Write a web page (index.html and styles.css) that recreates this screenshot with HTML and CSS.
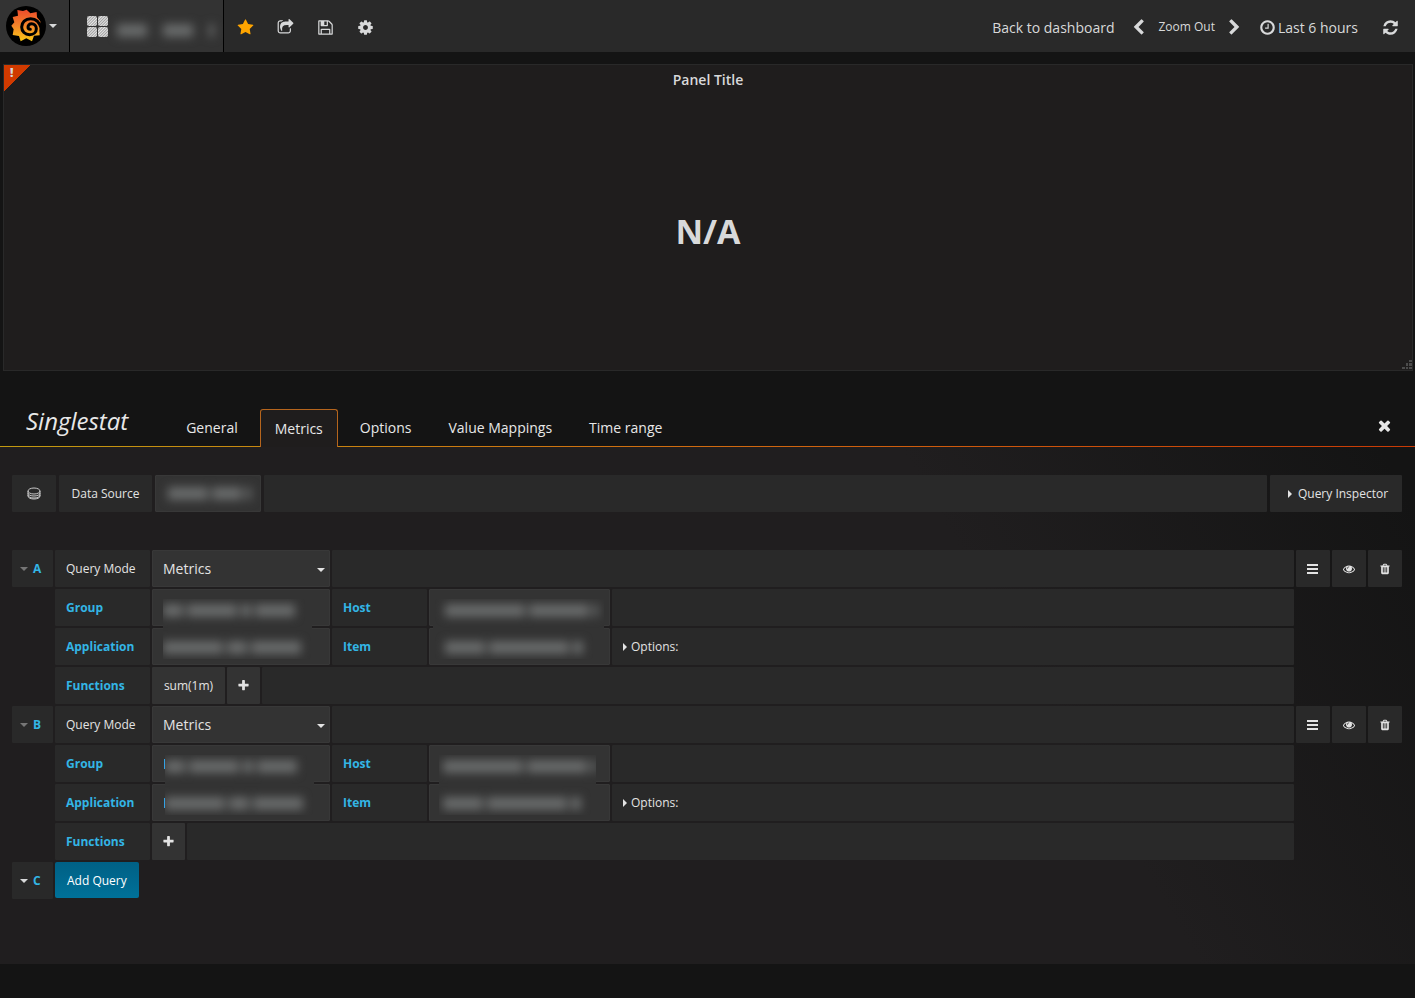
FILE: index.html
```html
<!DOCTYPE html>
<html lang="en">

<head>
    <meta charset="UTF-8">
    <meta name="viewport" content="width=device-width, initial-scale=1.0">
    <title>Grafana - Singlestat</title>
    <link rel="stylesheet" href="styles.css">
</head>

<body>
    <!-- icon set -->
    <svg class="sprite" aria-hidden="true">
        <symbol id="star" viewBox="0 0 1792 1792"><path d="M1728 647q0 22-26 48l-363 354 86 500q1 7 1 20 0 21-10.5 35.5t-30.5 14.5q-19 0-40-12l-449-236-449 236q-22 12-40 12-21 0-31.5-14.5t-10.5-35.5q0-6 2-20l86-500-364-354q-25-27-25-48 0-37 56-46l502-73 225-455q19-41 49-41t49 41l225 455 502 73q56 9 56 46z"/></symbol>
        <symbol id="share" viewBox="0 0 1792 1792"><path d="M1472 989v259q0 119-84.5 203.5t-203.5 84.5h-832q-119 0-203.5-84.5t-84.5-203.5v-832q0-119 84.5-203.5t203.5-84.5h255q13 0 22.5 9.5t9.5 22.5q0 27-26 32-77 26-133 60-10 4-16 4h-112q-66 0-113 47t-47 113v832q0 66 47 113t113 47h832q66 0 113-47t47-113v-214q0-19 18-29 28-13 54-37 16-16 35-8 21 9 21 29zm237-496l-384 384q-18 19-45 19-12 0-25-5-39-17-39-59v-192h-160q-323 0-438 131-119 137-74 473 3 23-20 34-8 2-12 2-16 0-26-13-10-14-21-31t-39.5-68.5-49.5-99.5-38.5-114-17.5-122q0-49 3.5-91t14-90 28-88 47-81.5 68.5-74 94.5-61.5 124.5-48.5 159.5-30.5 196.5-11h160v-192q0-42 39-59 13-5 25-5 26 0 45 19l384 384q19 19 19 45t-19 45z"/></symbol>
        <symbol id="save" viewBox="0 0 1792 1792"><path d="M512 1536h768v-384h-768v384zm896 0h128v-896q0-14-10-38.5t-20-34.5l-281-281q-10-10-34-20t-39-10v416q0 40-28 68t-68 28h-576q-40 0-68-28t-28-68v-416h-128v1280h128v-416q0-40 28-68t68-28h832q40 0 68 28t28 68v416zm-384-928v-320q0-13-9.5-22.5t-22.5-9.5h-192q-13 0-22.5 9.5t-9.5 22.5v320q0 13 9.5 22.5t22.5 9.5h192q13 0 22.5-9.5t9.5-22.5zm640 32v928q0 40-28 68t-68 28h-1344q-40 0-68-28t-28-68v-1344q0-40 28-68t68-28h928q40 0 88 20t76 48l280 280q28 28 48 76t20 88z"/></symbol>
        <symbol id="cog" viewBox="0 0 1792 1792"><path d="M1152 896q0-106-75-181t-181-75-181 75-75 181 75 181 181 75 181-75 75-181zm512-109v222q0 12-8 23t-20 13l-185 28q-19 54-39 91 35 50 107 138 10 12 10 25t-9 23q-27 37-99 108t-94 71q-12 0-26-9l-138-108q-44 23-91 38-16 136-29 186-7 28-36 28h-222q-14 0-24.5-8.5t-11.5-21.5l-28-184q-49-16-90-37l-141 107q-10 9-25 9-14 0-25-11-126-114-165-168-7-10-7-23 0-12 8-23 15-21 51-66.5t54-70.5q-27-50-41-99l-183-27q-13-2-21-12.5t-8-23.5v-222q0-12 8-23t19-13l186-28q14-46 39-92-40-57-107-138-10-12-10-24 0-10 9-23 26-36 98.5-107.5t94.5-71.5q13 0 26 10l138 107q44-23 91-38 16-136 29-186 7-28 36-28h222q14 0 24.5 8.5t11.5 21.5l28 184q49 16 90 37l142-107q9-9 24-9 13 0 25 10 129 119 165 170 7 8 7 22 0 12-8 23-15 21-51 66.5t-54 70.5q26 50 41 98l183 28q13 2 21 12.5t8 23.5z"/></symbol>
        <symbol id="left" viewBox="0 0 1792 1792"><path d="M1427 301l-531 531 531 531q19 19 19 45t-19 45l-166 166q-19 19-45 19t-45-19l-742-742q-19-19-19-45t19-45l742-742q19-19 45-19t45 19l166 166q19 19 19 45t-19 45z"/></symbol>
        <symbol id="right" viewBox="0 0 1792 1792"><path d="M1363 877l-742 742q-19 19-45 19t-45-19l-166-166q-19-19-19-45t19-45l531-531-531-531q-19-19-19-45t19-45l166-166q19-19 45-19t45 19l742 742q19 19 19 45t-19 45z"/></symbol>
        <symbol id="clock" viewBox="0 0 1792 1792"><path d="M1024 544v448q0 14-9 23t-23 9h-320q-14 0-23-9t-9-23v-64q0-14 9-23t23-9h224v-352q0-14 9-23t23-9h64q14 0 23 9t9 23zm416 352q0-148-73-273t-198-198-273-73-273 73-198 198-73 273 73 273 198 198 273 73 273-73 198-198 73-273zm224 0q0 209-103 385.5t-279.5 279.5-385.5 103-385.5-103-279.5-279.5-103-385.5 103-385.5 279.5-279.5 385.5-103 385.5 103 279.5 279.5 103 385.5z"/></symbol>
        <symbol id="refresh" viewBox="0 0 1792 1792"><path d="M1639 1056q0 5-1 7-64 268-268 434.5t-478 166.5q-146 0-282.5-55t-243.5-157l-129 129q-19 19-45 19t-45-19-19-45v-448q0-26 19-45t45-19h448q26 0 45 19t19 45-19 45l-137 137q71 66 161 102t187 36q134 0 250-65t186-179q11-17 53-117 8-23 30-23h192q13 0 22.5 9.5t9.5 22.5zm25-800v448q0 26-19 45t-45 19h-448q-26 0-45-19t-19-45 19-45l138-138q-148-137-349-137-134 0-250 65t-186 179q-11 17-53 117-8 23-30 23h-199q-13 0-22.5-9.5t-9.5-22.5v-7q65-268 270-434.5t480-166.5q146 0 284 55.5t245 156.5l130-129q19-19 45-19t45 19 19 45z"/></symbol>
        <symbol id="times" viewBox="0 0 1792 1792"><path d="M1490 1322q0 40-28 68l-136 136q-28 28-68 28t-68-28l-294-294-294 294q-28 28-68 28t-68-28l-136-136q-28-28-28-68t28-68l294-294-294-294q-28-28-28-68t28-68l136-136q28-28 68-28t68 28l294 294 294-294q28-28 68-28t68 28l136 136q28 28 28 68t-28 68l-294 294 294 294q28 28 28 68z"/></symbol>
        <symbol id="bars" viewBox="0 0 12 12"><path d="M0 1h11v2H0zM0 5h11v2H0zM0 9h11v2H0z"/></symbol>
        <symbol id="eye" viewBox="0 0 1792 1792"><path d="M1664 960q-152-236-381-353 61 104 61 225 0 185-131.5 316.5t-316.5 131.5-316.5-131.5-131.5-316.5q0-121 61-225-229 117-381 353 133 205 333.5 326.5t434.5 121.5 434.5-121.5 333.5-326.5zm-720-384q0-20-14-34t-34-14q-125 0-214.5 89.5t-89.5 214.5q0 20 14 34t34 14 34-14 14-34q0-86 61-147t147-61q20 0 34-14t14-34zm848 384q0 34-20 69-140 230-376.5 368.5t-499.5 138.5-499.5-139-376.5-368q-20-35-20-69t20-69q140-229 376.5-368t499.5-139 499.5 139 376.5 368q20 35 20 69z"/></symbol>
        <symbol id="trash" viewBox="0 0 1792 1792"><path d="M704 1376v-704q0-14-9-23t-23-9h-64q-14 0-23 9t-9 23v704q0 14 9 23t23 9h64q14 0 23-9t9-23zm256 0v-704q0-14-9-23t-23-9h-64q-14 0-23 9t-9 23v704q0 14 9 23t23 9h64q14 0 23-9t9-23zm256 0v-704q0-14-9-23t-23-9h-64q-14 0-23 9t-9 23v704q0 14 9 23t23 9h64q14 0 23-9t9-23zm-544-992h448l-48-117q-7-9-17-11h-317q-10 2-17 11zm928 32v64q0 14-9 23t-23 9h-96v948q0 83-47 143.5t-113 60.5h-832q-66 0-113-58.5t-47-141.5v-952h-96q-14 0-23-9t-9-23v-64q0-14 9-23t23-9h309l70-167q15-37 54-63t79-26h320q40 0 79 26t54 63l70 167h309q14 0 23 9t9 23z"/></symbol>
        <symbol id="plus" viewBox="0 0 1792 1792"><path d="M1600 736v192q0 40-28 68t-68 28h-416v416q0 40-28 68t-68 28h-192q-40 0-68-28t-28-68v-416h-416q-40 0-68-28t-28-68v-192q0-40 28-68t68-28h416v-416q0-40 28-68t68-28h192q40 0 68 28t28 68v416h416q40 0 68 28t28 68z"/></symbol>
    </svg>

    <nav class="navbar">
        <button class="brand" aria-label="Main menu">
            <svg class="logo" viewBox="0 0 120 120" aria-hidden="true">
                <defs>
                    <linearGradient id="flame" x1="0" y1="0" x2="0" y2="1">
                        <stop offset="0" stop-color="#ee4b2b"/>
                        <stop offset=".5" stop-color="#f4842a"/>
                        <stop offset="1" stop-color="#fcc915"/>
                    </linearGradient>
                </defs>
                <circle cx="60" cy="60" r="60" fill="#000"/>
                <path fill="url(#flame)" d="M62 11l11 11 19-4 1 16 10 12v14l-3 12 1 16-17 1-6 17-17-9-17 9-5-16-19-3 3-17-7-11 9-10-5-16 16-4-2-17 17 3z"/>
                <path fill="none" stroke="#000" stroke-width="9" stroke-linecap="round" d="M106 68C101 48 88 38 74 38 58 38 47 49 47 63c0 13 10 23 24 23 12 0 20-8 20-18 0-9-7-15-14-15-7 0-11 5-11 10 0 4 3 7 7 7"/>
            </svg>
            <span class="caret"></span>
        </button>
        <button class="dash-picker" aria-label="Dashboard">
            <svg class="grid-icon" viewBox="0 0 22 22" aria-hidden="true">
                <defs>
                    <pattern id="hatch" width="2" height="2" patternUnits="userSpaceOnUse" patternTransform="rotate(45)">
                        <rect width="2" height="2" fill="#a0a0a0"/>
                        <rect width="1" height="2" fill="#e8e8e8"/>
                    </pattern>
                </defs>
                <g fill="url(#hatch)">
                    <rect width="10" height="10" rx="2"/>
                    <rect x="11" width="10" height="10" rx="2"/>
                    <rect y="11" width="10" height="10" rx="2"/>
                    <rect x="11" y="11" width="10" height="10" rx="2"/>
                </g>
            </svg>
            <span class="smudge dash-name"><i class="w30"></i><i class="w30"></i><i class="w5"></i></span>
        </button>
        <div class="nav-actions">
            <button class="starred" aria-label="Star"><svg class="icon"><use href="#star"/></svg></button>
            <button aria-label="Share"><svg class="icon"><use href="#share"/></svg></button>
            <button aria-label="Save"><svg class="icon"><use href="#save"/></svg></button>
            <button aria-label="Settings"><svg class="icon"><use href="#cog"/></svg></button>
        </div>
        <div class="nav-time">
            <a href="#" class="back">Back to dashboard</a>
            <button aria-label="Shift time back"><svg class="icon"><use href="#left"/></svg></button>
            <button class="zoom">Zoom Out</button>
            <button aria-label="Shift time forward"><svg class="icon"><use href="#right"/></svg></button>
            <button class="range"><svg class="icon"><use href="#clock"/></svg>Last 6 hours</button>
            <button aria-label="Refresh"><svg class="icon"><use href="#refresh"/></svg></button>
        </div>
    </nav>

    <section class="panel">
        <div class="panel-error">!</div>
        <h2>Panel Title</h2>
        <div class="stat">N/A</div>
        <svg class="resize" viewBox="0 0 10 10" aria-hidden="true">
            <path d="M7 0h3v2H7zM4 3h2v3H4zM7 3h3v3H7zM0 7h3v2H0zM4 7h2v2H4zM7 7h3v2H7z"/>
        </svg>
    </section>

    <header class="tabs-header">
        <h1>Singlestat</h1>
        <nav class="tabs">
            <a href="#">General</a>
            <a href="#" class="active">Metrics</a>
            <a href="#">Options</a>
            <a href="#">Value Mappings</a>
            <a href="#">Time range</a>
        </nav>
        <button class="close" aria-label="Close"><svg class="icon"><use href="#times"/></svg></button>
    </header>

    <main class="editor">
        <div class="source-row">
            <div class="cell source-icon">
                <svg viewBox="0 0 14 14" aria-hidden="true">
                    <ellipse cx="7" cy="4" rx="6" ry="3"/>
                    <path d="M1 4v5c0 4 12 4 12 0V4M1 6c0 4 12 4 12 0M1 8c0 4 12 4 12 0"/>
                </svg>
            </div>
            <div class="cell source-label">Data Source</div>
            <button class="cell field source-value" aria-label="Data Source"><span class="smudge"><i class="w40"></i><i class="w30"></i><i class="w5"></i></span></button>
            <div class="cell grow"></div>
            <button class="cell inspector"><span class="caret-right"></span>Query Inspector</button>
        </div>

        <div class="query">
            <button class="cell letter"><span class="caret dim"></span>A</button>
            <div class="rows">
                <div class="row">
                    <label class="cell label" for="mode-a">Query Mode</label>
                    <div class="select">
                        <select id="mode-a" class="cell field"><option>Metrics</option></select>
                        <span class="caret"></span>
                    </div>
                    <div class="cell grow"></div>
                </div>
                <div class="row">
                    <div class="cell label key">Group</div>
                    <button class="cell field wide" aria-label="Group"></button>
                    <div class="cell label key">Host</div>
                    <button class="cell field host" aria-label="Host"></button>
                    <div class="cell grow"></div>
                    <div class="mask mask-group">
                        <span class="smudge"><i class="w20"></i><i class="w50"></i><i class="w10"></i><i class="w40"></i></span>
                        <span class="smudge"><i class="w60"></i><i class="w20"></i><i class="w50"></i></span>
                    </div>
                    <div class="mask mask-host">
                        <span class="smudge"><i class="w80"></i><i class="w60"></i><i class="w5"></i></span>
                        <span class="smudge"><i class="w40"></i><i class="w80"></i><i class="w10"></i></span>
                    </div>
                </div>
                <div class="row">
                    <div class="cell label key">Application</div>
                    <button class="cell field wide" aria-label="Application"></button>
                    <div class="cell label key">Item</div>
                    <button class="cell field host" aria-label="Item"></button>
                    <button class="cell grow options"><span class="caret-right"></span>Options:</button>
                </div>
                <div class="row">
                    <div class="cell label key">Functions</div>
                    <button class="cell field func">sum(1m)</button>
                    <button class="cell field add" aria-label="Add function"><svg class="icon"><use href="#plus"/></svg></button>
                    <div class="cell grow"></div>
                </div>
            </div>
            <div class="query-tools">
                <button class="cell" aria-label="Query menu"><svg class="icon"><use href="#bars"/></svg></button>
                <button class="cell" aria-label="Toggle query"><svg class="icon"><use href="#eye"/></svg></button>
                <button class="cell" aria-label="Remove query"><svg class="icon"><use href="#trash"/></svg></button>
            </div>
        </div>

        <div class="query query-b">
            <button class="cell letter"><span class="caret dim"></span>B</button>
            <div class="rows">
                <div class="row">
                    <label class="cell label" for="mode-b">Query Mode</label>
                    <div class="select">
                        <select id="mode-b" class="cell field"><option>Metrics</option></select>
                        <span class="caret"></span>
                    </div>
                    <div class="cell grow"></div>
                </div>
                <div class="row">
                    <div class="cell label key">Group</div>
                    <button class="cell field wide edge" aria-label="Group"></button>
                    <div class="cell label key">Host</div>
                    <button class="cell field host" aria-label="Host"></button>
                    <div class="cell grow"></div>
                    <div class="mask mask-group">
                        <span class="smudge"><i class="w20"></i><i class="w50"></i><i class="w10"></i><i class="w40"></i></span>
                        <span class="smudge"><i class="w60"></i><i class="w20"></i><i class="w50"></i></span>
                    </div>
                    <div class="mask mask-host">
                        <span class="smudge"><i class="w80"></i><i class="w60"></i><i class="w5"></i></span>
                        <span class="smudge"><i class="w40"></i><i class="w80"></i><i class="w10"></i></span>
                    </div>
                </div>
                <div class="row">
                    <div class="cell label key">Application</div>
                    <button class="cell field wide edge" aria-label="Application"></button>
                    <div class="cell label key">Item</div>
                    <button class="cell field host" aria-label="Item"></button>
                    <button class="cell grow options"><span class="caret-right"></span>Options:</button>
                </div>
                <div class="row">
                    <div class="cell label key">Functions</div>
                    <button class="cell field add" aria-label="Add function"><svg class="icon"><use href="#plus"/></svg></button>
                    <div class="cell grow"></div>
                </div>
            </div>
            <div class="query-tools">
                <button class="cell" aria-label="Query menu"><svg class="icon"><use href="#bars"/></svg></button>
                <button class="cell" aria-label="Toggle query"><svg class="icon"><use href="#eye"/></svg></button>
                <button class="cell" aria-label="Remove query"><svg class="icon"><use href="#trash"/></svg></button>
            </div>
        </div>

        <div class="query">
            <button class="cell letter"><span class="caret"></span>C</button>
            <button class="add-query">Add Query</button>
        </div>
    </main>
</body>

</html>
```
FILE: styles.css
```css
* {
    box-sizing: border-box;
    margin: 0;
    padding: 0;
}

body {
    background-color: #141414;
    color: #d8d9da;
    font-family: "Open Sans", Helvetica, Arial, sans-serif;
    font-size: 14px;
}

button,
select {
    background: none;
    border: none;
    color: inherit;
    font: inherit;
    cursor: pointer;
}

a {
    color: inherit;
    text-decoration: none;
}

.sprite {
    position: absolute;
    width: 0;
    height: 0;
}

.icon {
    width: 17px;
    height: 17px;
    fill: currentColor;
    flex: none;
}

.caret {
    border: 4px solid transparent;
    border-top-color: currentColor;
    border-bottom: none;
}

.caret-right {
    border: 4px solid transparent;
    border-left-color: currentColor;
    border-right: none;
}

/* top bar */
.navbar {
    display: flex;
    height: 52px;
    background-color: #292929;
}

.navbar button {
    display: flex;
    align-items: center;
}

.navbar .brand {
    width: 70px;
    padding-left: 6px;
    gap: 3px;
    background-color: #333;
    border-right: 1px solid #000;
}

.logo {
    width: 40px;
    height: 40px;
}

.navbar .dash-picker {
    width: 154px;
    padding: 2px 0 0 17px;
    gap: 8px;
    background-color: #333;
    border-right: 1px solid #000;
}

.grid-icon {
    width: 22px;
    height: 22px;
    flex: none;
}

.nav-actions {
    display: flex;
    gap: 23px;
    padding: 2px 0 0 13px;
}

.nav-actions .starred {
    color: #ffa500;
}

.nav-time {
    display: flex;
    align-items: center;
    margin-left: auto;
    padding: 2px 16px 0 0;
}

.nav-time .back {
    margin-right: 16px;
}

.nav-time .zoom {
    padding: 0 11px 1px;
    font-size: 12px;
}

.nav-time .range {
    gap: 2px;
    margin: 0 24px 0 16px;
}

/* blurred values */
.smudge {
    display: flex;
    align-items: center;
    gap: 4px;
    filter: blur(5px);
}

.smudge i {
    height: 13px;
    background-color: #686a6a;
}

.smudge .w5 { width: 5px; }
.smudge .w10 { width: 10px; }
.smudge .w20 { width: 20px; }
.smudge .w30 { width: 30px; }
.smudge .w40 { width: 40px; }
.smudge .w50 { width: 50px; }
.smudge .w60 { width: 60px; }
.smudge .w80 { width: 80px; }

.dash-name {
    gap: 16px;
    padding-top: 6px;
}

/* panel */
.panel {
    position: relative;
    display: flex;
    flex-direction: column;
    height: 307px;
    margin: 12px 2px 0 3px;
    background-color: #1f1d1d;
    border: 1px solid #292929;
}

.panel h2 {
    padding-top: 5px;
    font-size: 14px;
    font-weight: 600;
    line-height: 20px;
    text-align: center;
}

.stat {
    flex: 1;
    display: flex;
    align-items: center;
    justify-content: center;
    padding-top: 2px;
    font-size: 34px;
    font-weight: 700;
}

.panel-error {
    position: absolute;
    top: 0;
    left: 0;
    width: 27px;
    height: 27px;
    padding-left: 6px;
    background: linear-gradient(135deg, #d13a00 50%, transparent 50%);
    font-size: 12px;
    font-weight: 800;
    line-height: 15px;
}

.resize {
    position: absolute;
    right: 0;
    bottom: 0;
    width: 10px;
    height: 10px;
    fill: #4c4c4c;
}

/* tabs */
.tabs-header {
    display: flex;
    align-items: flex-end;
    height: 76px;
    padding: 0 22px 0 26px;
    background: linear-gradient(90deg, #c29a10, #d06a10 50%, #c93a05) bottom / 100% 1px no-repeat;
    color: #e8e8e8;
}

.tabs-header h1 {
    margin-right: 43px;
    padding-bottom: 9px;
    font-size: 24px;
    font-style: italic;
    font-weight: 400;
    line-height: 34px;
}

.tabs {
    display: flex;
    align-items: flex-end;
    gap: 7px;
}

.tabs a {
    height: 38px;
    padding: 0 15px;
    line-height: 38px;
}

.tabs .active {
    padding: 0 14px;
    background-color: #1f1d1d;
    border: 1px solid #b5651d;
    border-bottom: none;
    border-radius: 3px 3px 0 0;
}

.close {
    margin-left: auto;
    padding-bottom: 9px;
}

/* editor */
.editor {
    min-height: 517px;
    padding: 28px 13px 63px 12px;
    background: linear-gradient(60deg, #201e1f 70%, #141414 98%);
    color: #e3e3e3;
    font-size: 12px;
}

.cell {
    display: flex;
    align-items: center;
    height: 37px;
    background-color: #292929;
    border-radius: 1px;
}

.field {
    background-color: #333;
    border: 1px solid #383838;
}

.grow {
    flex: 1;
}

.source-row {
    display: flex;
    gap: 3px;
    margin-bottom: 38px;
}

.source-icon {
    width: 44px;
    justify-content: center;
}

.source-icon svg {
    width: 14px;
    height: 14px;
    fill: none;
    stroke: #c8c8c8;
}

.source-label {
    width: 93px;
    justify-content: center;
}

.source-value {
    width: 106px;
    padding-left: 12px;
    overflow: hidden;
}

.inspector {
    width: 132px;
    justify-content: center;
    gap: 6px;
    padding-left: 4px;
}

.query {
    display: flex;
    gap: 2px;
    margin-bottom: 2px;
}

.letter {
    width: 41px;
    gap: 5px;
    padding-left: 8px;
    color: #33b5e5;
    font-weight: 700;
}

.letter .caret {
    color: #d8d9da;
}

.letter .dim {
    color: #767676;
}

.rows {
    flex: 1;
    display: flex;
    flex-direction: column;
    gap: 2px;
}

.row {
    position: relative;
    display: flex;
    gap: 2px;
}

.label {
    width: 95px;
    padding-left: 11px;
}

.key {
    color: #33b5e5;
    font-weight: 700;
}

.select {
    position: relative;
    width: 178px;
}

.select select {
    width: 100%;
    padding-left: 10px;
    appearance: none;
    font-size: 14px;
}

.select .caret {
    position: absolute;
    top: 18px;
    right: 5px;
    pointer-events: none;
}

.wide {
    width: 178px;
}

.host {
    width: 181px;
}

.edge::before {
    content: "";
    width: 2px;
    height: 10px;
    margin-left: 11px;
    background-color: #33a2e5;
}

.mask {
    position: absolute;
    z-index: 1;
    top: 10px;
    display: flex;
    flex-direction: column;
    justify-content: space-between;
    height: 60px;
    padding: 5px 0;
    background-color: #333;
    overflow: hidden;
}

.mask-group {
    left: 108px;
    width: 149px;
}

.mask-host {
    left: 378px;
    width: 171px;
    padding-left: 12px;
}

.query-b .mask-group {
    left: 110px;
}

.query-b .mask-host {
    left: 384px;
    width: 157px;
    padding-left: 4px;
}

.options {
    gap: 4px;
    padding-left: 11px;
}

.func {
    width: 73px;
    justify-content: center;
}

.add {
    width: 33px;
    justify-content: center;
}

.func,
.add {
    border: none;
}

.add .icon {
    width: 13px;
    height: 13px;
}

.query-tools {
    display: flex;
    gap: 2px;
}

.query-tools .cell {
    width: 34px;
    justify-content: center;
}

.query-tools .icon {
    width: 12px;
    height: 12px;
}

.add-query {
    height: 36px;
    padding: 0 12px;
    background: linear-gradient(#006085, #007199);
    border-radius: 2px;
    color: #fff;
}
```
